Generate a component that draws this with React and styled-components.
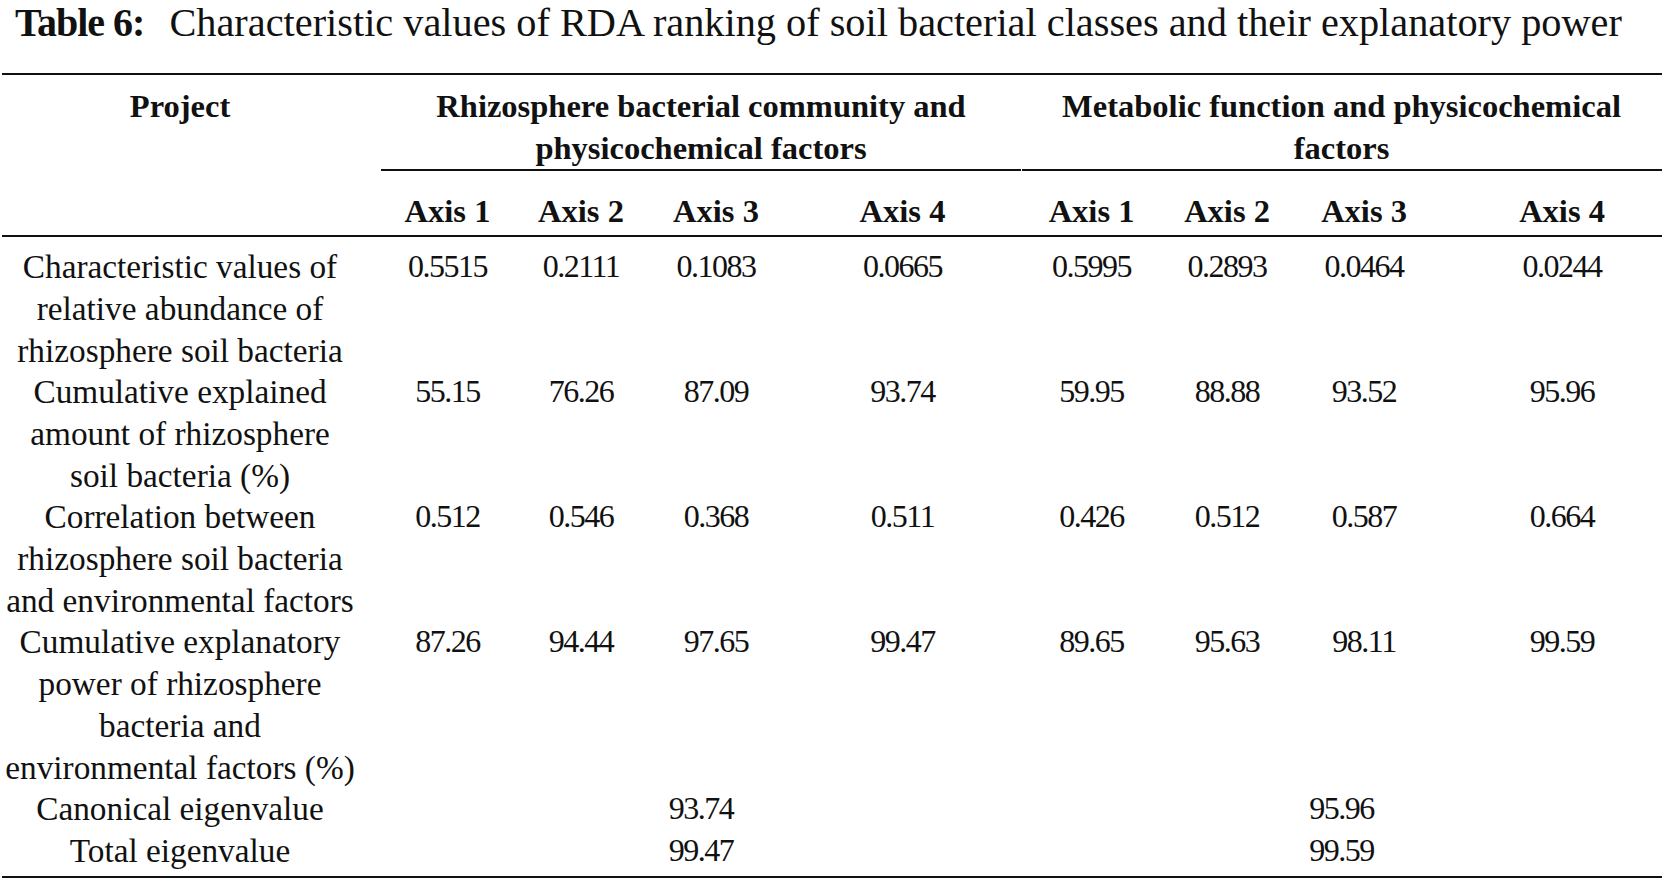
import React from 'react';
import styled, { createGlobalStyle } from 'styled-components';

const Global = createGlobalStyle`
  html, body { margin: 0; padding: 0; background: #fff; }
  body { font-family: "Liberation Serif", "Times New Roman", serif; color: #111; }
`;

const Page = styled.div`
  width: 1665px;
  height: 880px;
  overflow: hidden;
`;

const Title = styled.h1`
  margin: 0 0 28px 15px;
  font-size: 40.3px;
  line-height: 45px;
  font-weight: 400;
  white-space: nowrap;
`;

const TitleLabel = styled.span`
  font-weight: 700;
  font-size: 40px;
  letter-spacing: -1px;
  margin-right: 25px;
`;

const Table = styled.table`
  margin-left: 2px;
  width: 1660px;
  table-layout: fixed;
  border-collapse: collapse;
  border-top: 2px solid #111;
  border-bottom: 2px solid #111;
  font-size: 32px;
  line-height: 41.7px;
`;

const Head = styled.thead`
  border-bottom: 2px solid #111;
`;

const HeadCell = styled.th`
  font-weight: 700;
  font-size: 32.5px;
  text-align: center;
  vertical-align: top;
  white-space: nowrap;
  padding: ${(p) => (p.$axis ? '20px 0 2px' : '11px 0 1px')};
  padding-left: ${(p) => (p.$shift ? `${p.$shift}px` : '0')};
  padding-right: ${(p) => (p.$pr ? `${p.$pr}px` : '0')};
`;

const GroupCell = styled(HeadCell)`
  background-image: linear-gradient(#111, #111);
  background-repeat: no-repeat;
  background-position: right bottom;
  background-size: ${(p) => (p.$gap ? 'calc(100% - 1px)' : '100%')} 2px;
  padding-bottom: 2px;
`;

const Row = styled.tr`
  &:first-child td { padding-top: 9px; }
  &:last-child td { padding-bottom: 4px; }
`;

const LabelCell = styled.td`
  text-align: center;
  vertical-align: top;
  white-space: nowrap;
  font-size: 33.3px;
  padding: 0 23px 0 0;
`;

const ValueCell = styled.td`
  text-align: center;
  vertical-align: top;
  white-space: nowrap;
  letter-spacing: -1.5px;
  padding: 0 0 0 ${(p) => (p.$shift ? `${p.$shift}px` : '0')};
`;

const colWidths = [379, 133, 134, 136, 237, 141, 130, 144, 226];

const rows = [
  {
    label: ['Characteristic values of', 'relative abundance of', 'rhizosphere soil bacteria'],
    values: ['0.5515', '0.2111', '0.1083', '0.0665', '0.5995', '0.2893', '0.0464', '0.0244'],
  },
  {
    label: ['Cumulative explained', 'amount of rhizosphere', 'soil bacteria (%)'],
    values: ['55.15', '76.26', '87.09', '93.74', '59.95', '88.88', '93.52', '95.96'],
  },
  {
    label: ['Correlation between', 'rhizosphere soil bacteria', 'and environmental factors'],
    values: ['0.512', '0.546', '0.368', '0.511', '0.426', '0.512', '0.587', '0.664'],
  },
  {
    label: ['Cumulative explanatory', 'power of rhizosphere', 'bacteria and', 'environmental factors (%)'],
    values: ['87.26', '94.44', '97.65', '99.47', '89.65', '95.63', '98.11', '99.59'],
  },
];

const merged = [
  { label: 'Canonical eigenvalue', a: '93.74', b: '95.96' },
  { label: 'Total eigenvalue', a: '99.47', b: '99.59' },
];

const Lines = ({ lines }) =>
  lines.map((l, i) => (
    <React.Fragment key={i}>
      {i > 0 && <br />}
      {l}
    </React.Fragment>
  ));

export default function App() {
  const axes = ['Axis 1', 'Axis 2', 'Axis 3', 'Axis 4', 'Axis 1', 'Axis 2', 'Axis 3', 'Axis 4'];
  return (
    <Page>
      <Global />
      <Title>
        <TitleLabel>Table 6:</TitleLabel>
        Characteristic values of RDA ranking of soil bacterial classes and their explanatory power
      </Title>
      <Table>
        <colgroup>
          {colWidths.map((w, i) => (
            <col key={i} style={{ width: `${w}px` }} />
          ))}
        </colgroup>
        <Head>
          <tr>
            <HeadCell rowSpan={2} $pr={23}>Project</HeadCell>
            <GroupCell colSpan={4}>
              <Lines lines={['Rhizosphere bacterial community and', 'physicochemical factors']} />
            </GroupCell>
            <GroupCell colSpan={4} $gap>
              <Lines lines={['Metabolic function and physicochemical', 'factors']} />
            </GroupCell>
          </tr>
          <tr>
            {axes.map((a, i) => (
              <HeadCell key={i} $axis $shift={i === 7 ? 26 : 0}>
                {a}
              </HeadCell>
            ))}
          </tr>
        </Head>
        <tbody>
          {rows.map((r, ri) => (
            <Row key={ri}>
              <LabelCell>
                <Lines lines={r.label} />
              </LabelCell>
              {r.values.map((v, vi) => (
                <ValueCell key={vi} $shift={vi === 7 ? 26 : 0}>
                  {v}
                </ValueCell>
              ))}
            </Row>
          ))}
          {merged.map((m, mi) => (
            <Row key={`m${mi}`}>
              <LabelCell>{m.label}</LabelCell>
              <ValueCell colSpan={4}>{m.a}</ValueCell>
              <ValueCell colSpan={4}>{m.b}</ValueCell>
            </Row>
          ))}
        </tbody>
      </Table>
    </Page>
  );
}
